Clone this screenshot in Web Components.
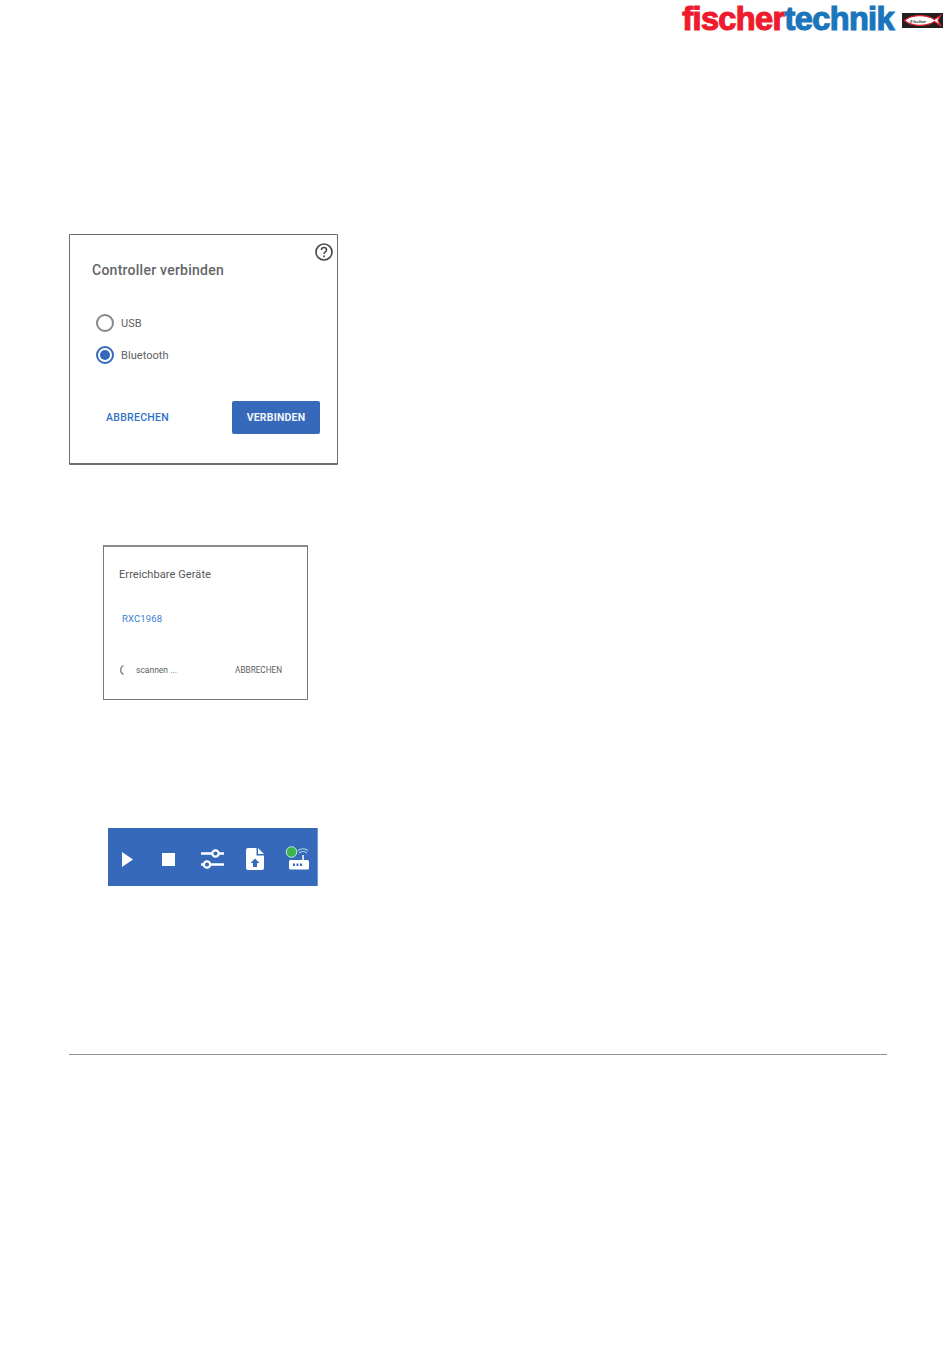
<!DOCTYPE html>
<html lang="de"><head><meta charset="utf-8"><title>fischertechnik</title>
<style>
html,body{margin:0;padding:0;background:#fff}
body{width:950px;height:1369px;overflow:hidden;font-family:Roboto,"Liberation Sans",sans-serif;display:flex;flex-direction:column}
</style></head><body>
<ft-header></ft-header>
<ft-connect></ft-connect>
<ft-devices></ft-devices>
<ft-toolbar></ft-toolbar>
<ft-rule></ft-rule>
<script>
function def(name, html){
  customElements.define(name, class extends HTMLElement{
    constructor(){super();this.attachShadow({mode:'open'}).innerHTML=html;}
  });
}
def('ft-header',`<style>
:host{display:flex;justify-content:flex-end;align-items:flex-start;height:234px;box-sizing:border-box;padding:0 7px 0 0;gap:8px}
.logo{font:700 32.5px/1 "Liberation Sans",Arial,sans-serif;letter-spacing:-.62px;height:34px;margin-top:3px;-webkit-text-stroke:1.2px currentColor;white-space:nowrap}
.r{color:#ee1c2e}.b{color:#1b75bc}
svg{display:block;margin-top:13px}
text{font:italic 700 5px "Liberation Serif",serif;fill:#222}
</style>
<div class="logo"><span class="r">fischer</span><span class="b">technik</span></div>
<svg width="41" height="15" viewBox="0 0 41 15"><rect width="41" height="15" fill="#231f20"/>
<path d="M2.500 7.500C9 1.500 24 1 32.500 6.500L38.500 2.500 36 7.500 38.500 12.500 32.500 8.500C24 14 9 13.500 2.500 7.500Z" fill="#fff" stroke="#d8232a" stroke-width="1.300"/>
<text x="8" y="9.500">Fischer</text></svg>`);

def('ft-connect',`<style>
:host{display:block;box-sizing:border-box;width:269px;height:231px;margin-left:69px;background:#fff;border:1px solid #6b6d70;border-bottom:2px solid #6b6d70;border-radius:1px;color:#4a4c4f;position:relative}
.help{position:absolute;top:7px;right:3px;display:block}
h2{margin:0;font:500 14px/18px Roboto,sans-serif;color:#636669;padding:26px 0 0 22px;letter-spacing:.25px}
.opts{display:flex;flex-direction:column;gap:14px;padding:35px 0 0 26px}
.opt{display:flex;align-items:center;gap:7px;height:18px;font:400 11px/18px Roboto,sans-serif;letter-spacing:.05px;color:#5c5f62}
.opt span:last-child{padding-top:1px}
.radio{box-sizing:border-box;width:18px;height:18px;border-radius:50%;border:2px solid #85878a;display:flex;align-items:center;justify-content:center}
.on{border-color:#3369bb}.on::after{content:"";width:10px;height:10px;border-radius:50%;background:#3369bb}
.acts{display:flex;justify-content:space-between;align-items:center;padding:37px 17px 0 36px}
.cancel{font:500 10.5px/14px Roboto,sans-serif;color:#2f73c9;letter-spacing:.28px}
.go{width:88px;height:33px;border-radius:2px;background:#3669b9;color:#f2f5fb;font:700 10.5px/33px Roboto,sans-serif;text-align:center;letter-spacing:.2px}
</style>
<svg class="help" width="20" height="20" viewBox="0 0 20 20" fill="none"><circle cx="10" cy="10" r="8" stroke="#46484b" stroke-width="1.6"/>
<path d="M7.400 8.100A2.600 2.600 0 0 1 12.600 8c0 1.800-2.600 2-2.600 4" stroke="#46484b" stroke-width="1.500"/><circle cx="10" cy="14.200" r="1" fill="#46484b"/></svg>
<h2>Controller verbinden</h2>
<div class="opts">
<div class="opt"><span class="radio"></span><span>USB</span></div>
<div class="opt"><span class="radio on"></span><span>Bluetooth</span></div>
</div>
<div class="acts"><span class="cancel">ABBRECHEN</span><span class="go">VERBINDEN</span></div>`);

def('ft-devices',`<style>
:host{display:block;box-sizing:border-box;width:205px;height:155px;margin:80px 0 0 103px;background:#fff;border:1px solid #77797c;border-top:2px solid #8a8c8f;color:#55585b}
h3{margin:0;font:400 11px/14px Roboto,sans-serif;color:#55585b;padding:21px 0 0 15px;letter-spacing:.08px}
.dev{font:400 9.5px/12px Roboto,sans-serif;color:#3a80d2;padding:31px 0 0 18px;letter-spacing:.14px}
.foot{display:flex;align-items:center;padding:39px 25px 0 13px;font:400 8.5px/12px Roboto,sans-serif;color:#5c5f62}
.foot svg{display:block;margin-right:9px}
.foot .c{margin-left:auto;font-size:8.200px}
</style>
<h3>Erreichbare Geräte</h3>
<div class="dev">RXC1968</div>
<div class="foot"><svg width="10" height="12" viewBox="0 0 10 12" fill="none"><path d="M6.500 1.500A5 5 0 0 0 6.500 10.500" stroke="#77797c" stroke-width="1.200"/></svg><span>scannen ...</span><span class="c">ABBRECHEN</span></div>`);

def('ft-toolbar',`<style>
:host{display:flex;align-items:flex-start;box-sizing:border-box;width:210px;height:58px;margin:128px 0 0 108px;background:#3669b9;border-right:1px solid #6f95d6;padding:18px 0 0 14px}
svg{display:block;flex:none}
</style>
<svg width="11" height="15" viewBox="0 0 11 15" style="margin-top:6px"><path d="M0 0 11 7.500 0 15Z" fill="#fff"/></svg>
<svg width="13" height="13" viewBox="0 0 13 13" style="margin:7px 0 0 29px"><rect width="13" height="13" fill="#fff"/></svg>
<svg width="23" height="20" viewBox="0 0 23 20" fill="none" style="margin:3px 0 0 26px"><path d="M0 4.500h11M18 4.500h5M0 15.500h2M10 15.500h13" stroke="#fff" stroke-width="2.400"/><circle cx="14.500" cy="4.500" r="3.200" stroke="#fff" stroke-width="2.200"/><circle cx="6" cy="15.500" r="3.200" stroke="#fff" stroke-width="2.200"/></svg>
<svg width="18" height="22" viewBox="0 0 18 22" style="margin:2px 0 0 22px"><path d="M2 0H10.500V7.500H18V20a2 2 0 0 1-2 2H2a2 2 0 0 1-2-2V2A2 2 0 0 1 2 0Z" fill="#fff"/><path d="M12 0 18 6H12Z" fill="#fff"/><path d="M9 10.500 13.500 15H11v4H7v-4H4.500Z" fill="#3669b9"/></svg>
<svg width="25" height="24" viewBox="0 0 25 24" style="margin:0 0 0 21px"><circle cx="6.500" cy="6" r="5.300" fill="#3cb54a" stroke="#dff" stroke-width=".8"/><g fill="none" stroke="#a8d8ea" stroke-width="1.100"><path d="M13 4.500Q18 1 23 4.500"/><path d="M14 7Q18 4 22 7"/></g><path d="M17.300 9h1.500v5h-1.500Z" fill="#fff"/><rect x="4" y="14" width="20" height="9.500" rx="1.500" fill="#fff"/><path d="M8 17.500h2v2.500H8ZM11.500 17.500h2v2.500h-2ZM15 17.500h2v2.500h-2Z" fill="#3669b9"/></svg>`);

def('ft-rule',`<style>:host{display:block;width:818px;height:1px;margin:168px 0 0 69px;background:#8e8f91}</style>`);
</script>
</body></html>
